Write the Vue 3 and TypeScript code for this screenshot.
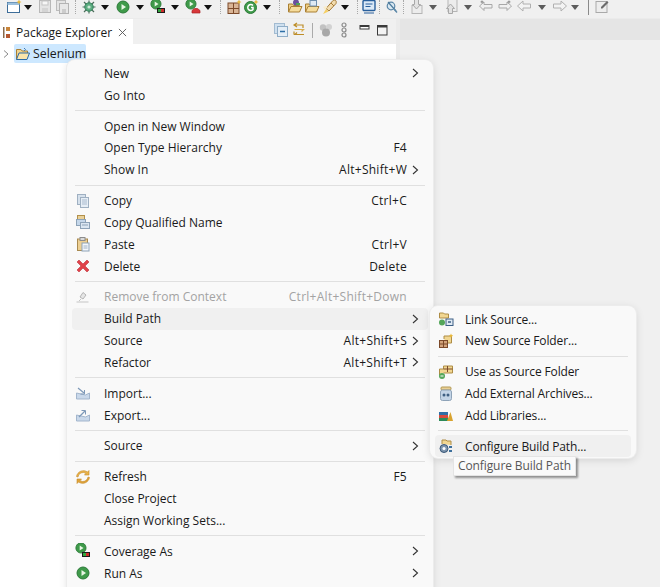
<script setup lang="ts">
type Row = { sep?: boolean; label?: string; key?: string; sub?: boolean; icon?: string; off?: boolean; hover?: boolean };

const play = `<circle cx="7" cy="7" r="6" fill="#3f9a4a" stroke="#2b7a38"/><path d="M5.5 4v6l4.5-3z" fill="#e8f6e4"/>`;
const ICONS: Record<string, string> = {
  newwin: `<rect x="1.5" y="3.5" width="12" height="10" fill="#fff" stroke="#3d6d99"/><rect x="1.5" y="3.5" width="12" height="2.5" fill="#9cc0dd"/><path d="M13 .5l.8 1.7 1.7.8-1.7.8-.8 1.700-.8-1.700-1.700-.8 1.700-.8z" fill="#e8b83a"/>`,
  save: `<rect x="2.5" y="1.500" width="11" height="12" fill="#e4e4e4" stroke="#b8b8b8"/><rect x="5" y="2" width="6" height="4" fill="#f6f6f6" stroke="#c4c4c4"/><rect x="5" y="9" width="6" height="4" fill="#d4d4d4"/>`,
  saveall: `<rect x="2.5" y="1.500" width="9" height="10" fill="#e4e4e4" stroke="#bcbcbc"/><rect x="5.5" y="4.500" width="9" height="10" fill="#e8e8e8" stroke="#b4b4b4"/><rect x="8" y="10" width="4" height="4" fill="#cccccc"/>`,
  bug: `<path d="M3 3l10 10M13 3L3 13M1.5 8h13M8 1.5v13" stroke="#4c6f5c" stroke-width="1.2"/><circle cx="8" cy="8" r="4.2" fill="#5fae82" stroke="#2f7d57"/><circle cx="8" cy="8" r="1.6" fill="#cfe9d8"/>`,
  run: `<g transform="translate(1 1)">${play}</g>`,
  cov: `<g transform="translate(0 -1) scale(.85)">${play}</g><rect x="7" y="9" width="8" height="5" fill="#1b1b1b"/><rect x="8" y="10" width="3" height="3" fill="#2fa83e"/><rect x="11" y="10" width="3" height="3" fill="#cf2b2b"/>`,
  ext: `<g transform="translate(0 -1) scale(.85)">${play}</g><path d="M7 14v-2.5L9.5 9.5h3L15 11.5V14z" fill="#d8373a" stroke="#a92327" stroke-width=".7"/>`,
  grid: `<rect x="2" y="4" width="11" height="10.500" fill="#d9b596" stroke="#7c4a2a"/><path d="M7.500 4v10.500M2 9.500h11" stroke="#7c4a2a"/><path d="M13 .5l.8 1.700 1.700.8-1.700.8-.8 1.700-.8-1.700-1.700-.8 1.700-.8z" fill="#e8b83a"/>`,
  gclass: `<circle cx="7.500" cy="8.500" r="6" fill="#3f9a4a" stroke="#2b7a38"/><path d="M10 6.500A3 3 0 1 0 10 10.500V8.500H8" fill="none" stroke="#fff" stroke-width="1.500"/><path d="M13 .5l.8 1.700 1.700.8-1.700.8-.8 1.700-.8-1.700-1.700-.8 1.700-.8z" fill="#e8b83a"/>`,
  openp: `<path d="M1.500 13V5h4l1 1.500h6V8" fill="#efcf86" stroke="#a97f33"/><path d="M1.500 13l2.500-5.500h11L12.500 13z" fill="#f6dc9c" stroke="#a97f33"/><circle cx="9" cy="3.500" r="3" fill="#6b4f9e"/><rect x="9" y="4" width="4" height="2" fill="#4ea35a"/>`,
  opent: `<path d="M1.500 13V5h4l1 1.500h6V8" fill="#efcf86" stroke="#a97f33"/><path d="M1.500 13l2.500-5.500h11L12.500 13z" fill="#f6dc9c" stroke="#a97f33"/><rect x="6" y="1.500" width="6.500" height="5.500" fill="#dfe9f3" stroke="#6f8fae"/>`,
  rocket: `<path d="M4 9.500L11 1.500c2-1 4 0 3 3L7 12z" fill="#f2dcae" stroke="#a57a35"/><path d="M9 4l3 3" stroke="#a57a35"/><path d="M4 10l2.500 2.500L1 15z" fill="#f6cf62"/><path d="M1 8l3-1 1.500 1L3 11z" fill="#f9eccb"/>`,
  mon: `<rect x="2" y="1.500" width="12" height="10" rx="1" fill="#dbe9f7" stroke="#285f9c" stroke-width="1.400"/><path d="M4.500 5h7M4.500 7.500h5" stroke="#285f9c"/><path d="M3 13.500h10v1H3z" fill="#285f9c"/>`,
  search: `<circle cx="7" cy="7" r="3.800" fill="#dbe9f2" stroke="#5b87a8" stroke-width="1.200"/><path d="M4 3l8 9" stroke="#4c7a9c" stroke-width="1.200"/><path d="M10 10l3 3.500" stroke="#5b87a8" stroke-width="1.400"/>`,
  gdown: `<rect x="3" y="6.500" width="10" height="8" fill="#ececec" stroke="#b5b5b5"/><path d="M5.500 .5h4v5h2L7.500 10l-4-4.500h2z" fill="#e2e2e2" stroke="#a8a8a8"/>`,
  gup: `<rect x="5" y=".5" width="9" height="12" fill="#ececec" stroke="#b5b5b5"/><path d="M5.500 14.500v-5h-2l4-4.500 4 4.500h-2v5z" fill="#e2e2e2" stroke="#a8a8a8"/>`,
  back2: `<path d="M1.500 7L6 3v2.500h8V9H6v2.500z" fill="#f0f0f0" stroke="#a8a8a8"/><path d="M4 1l.6 1.300 1.400.6-1.400.6L4 4.800l-.6-1.300L2 2.900l1.400-.6z" fill="#8c8c8c"/>`,
  fwd2: `<path d="M14.500 7L10 3v2.500H2V9h8v2.500z" fill="#f0f0f0" stroke="#a8a8a8"/><path d="M12 1l.6 1.300 1.400.6-1.400.6-.6 1.300-.6-1.300L10 2.900l1.400-.6z" fill="#8c8c8c"/>`,
  back: `<path d="M1.500 7L7 2v3h7.500v4H7v3z" fill="#f3f3f3" stroke="#b0b0b0"/>`,
  fwd: `<path d="M14.500 7L9 2v3H1.500v4H9v3z" fill="#f3f3f3" stroke="#b0b0b0"/>`,
  pin: `<rect x="2" y="2.500" width="11" height="11" fill="#ededed" stroke="#a9a9a9"/><path d="M7 8l6-6 1.500 1.500-6 6H7z" fill="#6b6b6b"/>`,
  pkg: `<rect x="3" y="2" width="1.500" height="11" fill="#8a6a4a"/><rect x="6" y="2" width="4" height="4" fill="#c9853a"/><rect x="6" y="9" width="4" height="4" fill="#b5562f"/>`,
  proj: `<path d="M1.500 13.500V3.500h4.500l1.200 1.500h5.300v2" fill="#f0d48e" stroke="#a97f33"/><path d="M1.500 13.500L4 7h10.500l-2.500 6.500z" fill="#fbe5ab" stroke="#2d6aa5"/><path d="M9 2l1.500 1.500L9 5" stroke="#3c7ab3" fill="none"/>`,
  collapse: `<rect x="1.500" y="1.500" width="10" height="10" fill="#cfe0ef" stroke="#a2bbd1"/><rect x="4.500" y="4.500" width="10" height="10" fill="#e4eef7" stroke="#8fadc7"/><path d="M7 9.500h5" stroke="#2f6fa6" stroke-width="1.500"/>`,
  link: `<path d="M6 1L3 3l3 2M3 3h9v3" fill="none" stroke="#bd8d28" stroke-width="1.200"/><path d="M3.500 7.500h9l-2 2" fill="none" stroke="#d9ad4b" stroke-width="1.200"/><path d="M13 12.500H4l2-2M3 9.500v3" fill="none" stroke="#bd8d28" stroke-width="1.200"/>`,
  filter: `<circle cx="5" cy="5.500" r="3.200" fill="#c2c2c2"/><circle cx="11" cy="5" r="3" fill="#d2d2d2"/><circle cx="8" cy="10.500" r="4" fill="#a8a8a8"/>`,
  menu3: `<circle cx="8" cy="3" r="2" fill="none" stroke="#8a8a8a" stroke-width="1.200"/><circle cx="8" cy="8" r="2" fill="none" stroke="#8a8a8a" stroke-width="1.200"/><circle cx="8" cy="13" r="2" fill="none" stroke="#8a8a8a" stroke-width="1.200"/>`,
  minw: `<rect x="3" y="3.500" width="9" height="3.500" fill="#fff" stroke="#3a3a3a"/><rect x="3" y="3.500" width="9" height="1.500" fill="#3a3a3a"/>`,
  maxw: `<rect x="2.500" y="3.500" width="9.500" height="9.500" fill="#f3f3f3" stroke="#3a3a3a"/><rect x="2.500" y="3.500" width="9.500" height="2" fill="#3a3a3a"/>`,
  copy: `<rect x="2.500" y="1.500" width="8" height="10" fill="#d6e1ec" stroke="#9fb0c2"/><rect x="5.500" y="4.500" width="8" height="10" fill="#e6eef6" stroke="#9fb0c2"/><path d="M7 7h5M7 9h5M7 11h5" stroke="#a9bace"/>`,
  copyq: `<rect x="2.500" y="1.500" width="7" height="5" fill="#e9d19a" stroke="#b2904a"/><rect x="1.500" y="5.500" width="9" height="6" fill="#c5d7ea" stroke="#8ea3b8"/><rect x="5.500" y="8.500" width="9" height="6" fill="#dbe6f1" stroke="#8ea3b8"/><path d="M7 11h6" stroke="#8ea3b8"/>`,
  paste: `<rect x="2.500" y="3" width="10" height="11.500" fill="#edcf92" stroke="#a98a50"/><rect x="5" y="1.500" width="5" height="3" fill="#d9d9d9" stroke="#8c8c8c"/><rect x="7" y="7" width="7" height="8" fill="#f4f7fb" stroke="#8ea3b8"/><path d="M8.500 10h4M8.500 12h4" stroke="#9fb2c6"/>`,
  del: `<path d="M2 4l2-2 4 4 4-4 2 2-4 4 4 4-2 2-4-4-4 4-2-2 4-4z" fill="#e0424a" stroke="#c0323a" stroke-width=".6"/>`,
  remove: `<path d="M5 8l3-4.500 3 2.500-3 4z" fill="#e6e6e6" stroke="#b5b5b5"/><path d="M1.500 13h12" stroke="#c5c5c5"/><path d="M6 10l-2 2" stroke="#c5c5c5"/>`,
  imp: `<path d="M1.500 8v6h13V8l-4 2z" fill="#c9d8ea" stroke="#a3b6cd"/><path d="M3 3l6 5" stroke="#7e99b8" stroke-width="1.200"/><path d="M9.500 5v4h-4" fill="none" stroke="#7e99b8"/>`,
  exp: `<path d="M1.500 8v6h13V8l-4 2z" fill="#c9d8ea" stroke="#a3b6cd"/><path d="M4 10l6-6" stroke="#7e99b8" stroke-width="1.200"/><path d="M6.500 3.500h4v4" fill="none" stroke="#7e99b8"/>`,
  refresh: `<path d="M3 8a5 5 0 0 1 8-3.500L9.500 6H14V1.500L12.500 3A7 7 0 0 0 1.500 7.500z" fill="#e9b44c" stroke="#c68a26" stroke-width=".6"/><path d="M13 8a5 5 0 0 1-8 3.500L6.500 10H2v4.500L3.500 13a7 7 0 0 0 11-4.500z" fill="#dfa43b" stroke="#c68a26" stroke-width=".6"/>`,
  linksrc: `<path d="M1.500 7V2h4l1 1h4v4z" fill="#f1d691" stroke="#ae8d46"/><circle cx="4" cy="11.500" r="3" fill="#54a65a"/><rect x="8" y="8" width="7" height="6.500" fill="#dfe9f3" stroke="#3c5f85"/><path d="M10 11h3" stroke="#3c5f85" stroke-width="1.500"/>`,
  newsrc: `<path d="M6 6V3h7.500v7H9" fill="#f1d691" stroke="#ae8d46"/><rect x="1.500" y="7.500" width="8" height="7" fill="#d3a37b" stroke="#7c4a2a"/><path d="M5.500 7.500v7M1.500 11h8" stroke="#7c4a2a"/><path d="M13 .5l.7 1.500 1.500.7-1.500.7-.7 1.500-.7-1.500-1.500-.7 1.500-.7z" fill="#e8b83a"/>`,
  usesrc: `<path d="M1.500 11V5h4V2h9v7h-9" fill="#f1d691" stroke="#ae8d46"/><path d="M9.500 2v6M5.500 5h9" stroke="#7c4a2a"/><circle cx="4" cy="12" r="3" fill="#54a65a"/><path d="M2.500 12h3" stroke="#fff"/>`,
  jar: `<rect x="3" y="1" width="10" height="3" rx="1" fill="#e8cf94" stroke="#b39954"/><rect x="2.500" y="4" width="11" height="10.500" rx="2" fill="#c3d4e6" stroke="#8ea3b8"/><circle cx="6" cy="9" r="1.500" fill="#3f5f82"/><circle cx="10" cy="9" r="1.500" fill="#3f5f82"/>`,
  lib: `<rect x="1" y="11" width="9" height="3" fill="#2c8a5a"/><rect x="1" y="8" width="9" height="3" fill="#d84a3d"/><rect x="1" y="5" width="9" height="3" fill="#2f6fa6"/><path d="M9 14l3.500-9 2.500 9z" fill="#d8a32f"/>`,
  conf: `<path d="M4 6V2h4l1 1h4v4" fill="#f1d691" stroke="#ae8d46"/><circle cx="6" cy="10.500" r="4" fill="#7d95ae" stroke="#3a5877"/><circle cx="6" cy="10.500" r="1.500" fill="#fff"/><rect x="11" y="8" width="3" height="2" fill="#3c6f9c"/><rect x="11" y="12" width="3" height="2" fill="#3c6f9c"/>`,
};

const main: Row[] = [
  { label: "New", sub: true }, { label: "Go Into" }, { sep: true },
  { label: "Open in New Window" }, { label: "Open Type Hierarchy", key: "F4" }, { label: "Show In", key: "Alt+Shift+W", sub: true }, { sep: true },
  { label: "Copy", key: "Ctrl+C", icon: "copy" }, { label: "Copy Qualified Name", icon: "copyq" }, { label: "Paste", key: "Ctrl+V", icon: "paste" }, { label: "Delete", key: "Delete", icon: "del" }, { sep: true },
  { label: "Remove from Context", key: "Ctrl+Alt+Shift+Down", icon: "remove", off: true }, { label: "Build Path", sub: true, hover: true }, { label: "Source", key: "Alt+Shift+S", sub: true }, { label: "Refactor", key: "Alt+Shift+T", sub: true }, { sep: true },
  { label: "Import...", icon: "imp" }, { label: "Export...", icon: "exp" }, { sep: true },
  { label: "Source", sub: true }, { sep: true },
  { label: "Refresh", key: "F5", icon: "refresh" }, { label: "Close Project" }, { label: "Assign Working Sets..." }, { sep: true },
  { label: "Coverage As", icon: "cov", sub: true }, { label: "Run As", icon: "run", sub: true },
];
const flyout: Row[] = [
  { label: "Link Source...", icon: "linksrc" }, { label: "New Source Folder...", icon: "newsrc" }, { sep: true },
  { label: "Use as Source Folder", icon: "usesrc" }, { label: "Add External Archives...", icon: "jar" }, { label: "Add Libraries...", icon: "lib" }, { sep: true },
  { label: "Configure Build Path...", icon: "conf", hover: true },
];

type Tool = { c: number; i?: string; k?: "dd" | "dds" | "dot" | "bar" };
const raw: Tool[] = [
  { c: 15, i: "newwin" }, { c: 27, k: "dd" }, { c: 44, i: "save" }, { c: 64, i: "saveall" }, { c: 75, k: "dot" },
  { c: 88, i: "bug" }, { c: 105, k: "dd" }, { c: 123, i: "run" }, { c: 140, k: "dd" }, { c: 158, i: "cov" }, { c: 175, k: "dd" },
  { c: 193, i: "ext" }, { c: 210, k: "dd" }, { c: 220, k: "dot" }, { c: 233, i: "grid" }, { c: 251, i: "gclass" }, { c: 269, k: "dd" }, { c: 279, k: "dot" },
  { c: 294, i: "openp" }, { c: 312, i: "opent" }, { c: 330, i: "rocket" }, { c: 347, k: "dd" }, { c: 357, k: "dot" }, { c: 369, i: "mon" }, { c: 380, k: "dot" },
  { c: 392, i: "search" }, { c: 403, k: "dot" }, { c: 416, i: "gdown" }, { c: 433, k: "dds" }, { c: 451, i: "gup" }, { c: 468, k: "dds" },
  { c: 486, i: "back2" }, { c: 505, i: "fwd2" }, { c: 525, i: "back" }, { c: 542, k: "dds" }, { c: 560, i: "fwd" }, { c: 577, k: "dds" }, { c: 587, k: "bar" }, { c: 601, i: "pin" },
];
const tools = raw.map((t, n) => {
  const left = n === 0 ? 6 : (raw[n - 1].c + t.c) / 2;
  const right = n === raw.length - 1 ? t.c + 9 : (t.c + raw[n + 1].c) / 2;
  return { ...t, w: right - left };
});
const paneTools = ["collapse", "link", "bar", "filter", "menu3", "minw", "maxw"];
</script>

<template>
  <div class="app">
    <div class="toolbar">
      <div v-for="(t, n) in tools" :key="n" class="tool" :style="{ width: t.w + 'px' }">
        <svg v-if="t.i" class="ic" viewBox="0 0 16 16" v-html="ICONS[t.i]"></svg>
        <span v-else :class="t.k"></span>
      </div>
    </div>
    <div class="work">
      <div class="pane">
        <div class="tabbar">
          <div class="tab">
            <svg class="ic" viewBox="0 0 16 16" v-html="ICONS.pkg"></svg>
            <span class="tabtext">Package Explorer</span>
            <svg class="close" viewBox="0 0 10 10"><path d="M1 1l8 8M9 1l-8 8" stroke="#555" stroke-width="1" /></svg>
          </div>
          <div class="panetools">
            <template v-for="p in paneTools" :key="p">
              <span v-if="p === 'bar'" class="pbar"></span>
              <svg v-else class="ic" :class="'t-' + p" viewBox="0 0 16 16" v-html="ICONS[p]"></svg>
            </template>
          </div>
        </div>
        <div class="tree">
          <svg class="twist" viewBox="0 0 8 10"><path d="M2 1.500L6 5 2 8.500" fill="none" stroke="#8a8a8a" /></svg>
          <div class="node">
            <svg class="ic" viewBox="0 0 16 16" v-html="ICONS.proj"></svg>
            <span>Selenium</span>
          </div>
        </div>
      </div>
      <div class="side"><div class="sidehead"></div></div>
    </div>

    <div class="menu main-menu">
      <template v-for="(r, n) in main" :key="n">
        <div v-if="r.sep" class="sep"></div>
        <div v-else class="row" :class="{ off: r.off, hover: r.hover }">
          <span class="rowicon"><svg v-if="r.icon" class="ic" viewBox="0 0 16 16" v-html="ICONS[r.icon]"></svg></span>
          <span class="label">{{ r.label }}</span>
          <span class="key">{{ r.key }}</span>
          <span class="arrow"><svg v-if="r.sub" viewBox="0 0 8 10"><path d="M2 1L6.500 5 2 9" fill="none" stroke="#333" stroke-width="1.100" /></svg></span>
        </div>
      </template>
    </div>

    <div class="menu fly-menu">
      <template v-for="(r, n) in flyout" :key="n">
        <div v-if="r.sep" class="sep"></div>
        <div v-else class="row" :class="{ hover: r.hover }">
          <span class="rowicon"><svg class="ic" viewBox="0 0 16 16" v-html="ICONS[r.icon!]"></svg></span>
          <span class="label">{{ r.label }}</span>
        </div>
      </template>
    </div>

    <div class="tip">Configure Build Path</div>
  </div>
</template>

<style>
html, body { margin: 0; background: #f0f0f0; overflow: hidden; }
</style>

<style scoped>
.app {
  position: relative; width: 660px; height: 587px; overflow: hidden;
  background: #f0f0f0; color: #1a1a1a;
  font-family: "Open Sans", "Noto Sans", sans-serif; font-size: 12px;
}
.toolbar { display: flex; align-items: flex-start; height: 18px; padding-left: 6px; }
.tool { display: flex; align-items: center; justify-content: center; height: 14px; flex: none; }
.ic { width: 16px; height: 16px; flex: none; display: block; }
.dd { width: 0; height: 0; border: 4px solid transparent; border-top: 5px solid #111; border-bottom: 0; }
.dds { width: 0; height: 0; border: 4px solid transparent; border-top: 5px solid #5c5c5c; border-bottom: 0; }
.dot { width: 1px; height: 14px; border-left: 1px dotted #a8a8a8; }
.bar { width: 1px; height: 15px; background: #8a8a8a; }
.work { display: flex; height: 569px; padding-top: 1px; gap: 4px; background: #ebebeb; }
.pane { width: 396px; background: #fff; flex: none; }
.tabbar { display: flex; height: 25px; background: #f0f0f0; }
.tab { display: flex; align-items: center; width: 133px; background: #fff; padding-top: 2px; box-sizing: border-box; }
.tabtext { font-size: 12px; white-space: nowrap; }
.close { width: 9px; height: 9px; margin-left: 6px; flex: none; }
.panetools { display: flex; align-items: center; gap: 2px; margin-left: auto; padding-right: 5px; margin-top: -3px; }
.t-menu3 { margin-right: 3px; }
.pbar { width: 1px; height: 15px; background: #aaa; margin: 0 3px; }
.tree { display: flex; align-items: center; height: 19px; padding-left: 2px; }
.twist { width: 8px; height: 10px; }
.node { display: flex; align-items: center; gap: 2px; margin-left: 4px; height: 19px; width: 72px; background: #cde8ff; box-sizing: border-box; padding-left: 1px; font-size: 12.3px; border-radius: 2px; }
.side { flex: 1; background: #f0f0f0; }
.sidehead { height: 21px; background: #e5e5e5; }

.menu {
  position: absolute; box-sizing: border-box; background: #f9f9f9; border-radius: 8px;
  box-shadow: 0 0 0 1px #ececec, 0 2px 8px rgba(0, 0, 0, .13);
}
.main-menu { left: 67px; top: 60px; width: 366px; height: 560px; padding: 2.400px 5px; }
.fly-menu { left: 430px; top: 306px; width: 206px; padding: 2.100px 5px; height: 152px; letter-spacing: -.14px; }
.row { display: flex; align-items: center; height: 21.85px; border-radius: 4px; white-space: nowrap; }
.row.hover { background: #f0f0f0; }
.row.off { color: #a3a3a3; }
.rowicon { width: 32px; display: flex; justify-content: flex-start; padding-left: 3px; box-sizing: border-box; flex: none; }
.fly-menu .rowicon { width: 30px; }
.label { flex: none; }
.key { margin-left: auto; letter-spacing: .27px; }
.arrow { width: 21px; flex: none; display: flex; justify-content: flex-start; padding-left: 4px; box-sizing: border-box; }
.arrow svg { width: 8px; height: 10px; display: block; }
.sep { height: 1px; margin: 4px 3px; background: #e0e0e0; }
.tip {
  position: absolute; left: 453px; top: 456px; width: 123px; height: 20px; box-sizing: border-box;
  background: #fafafa; color: #575757; border: 1px solid #e4e4e4; padding-left: 4px; line-height: 18px;
  box-shadow: 2px 2px 2px rgba(0, 0, 0, .4); font-size: 12px; letter-spacing: -.1px; white-space: nowrap;
}
</style>
